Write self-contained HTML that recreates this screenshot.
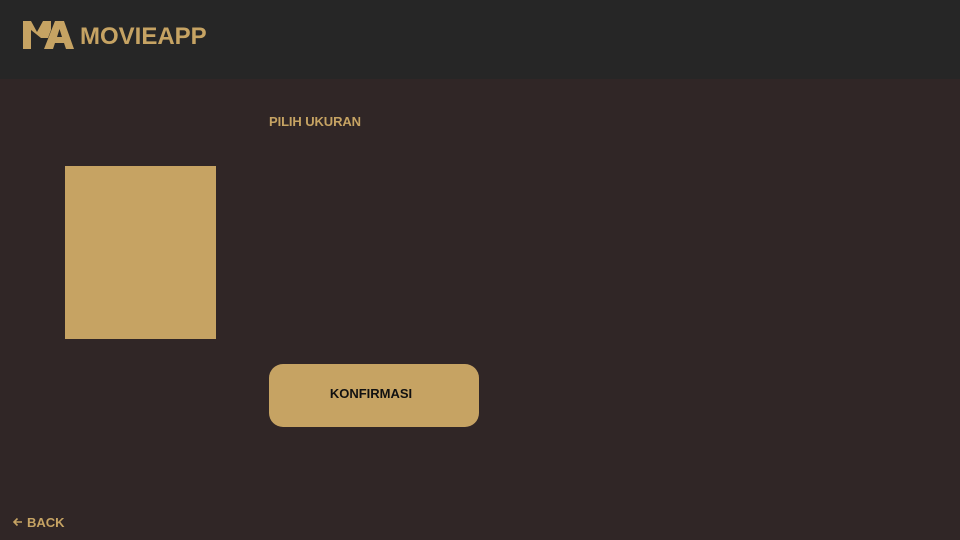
<!DOCTYPE html>
<html><head><style>
body{margin:0;width:960px;height:540px;background:#302626;font-family:"Liberation Sans",sans-serif;position:relative;overflow:hidden}
.hdr{position:absolute;left:0;top:0;width:960px;height:79px;background:#262626}
.t{position:absolute;color:#c6a363;font-weight:bold}
</style></head><body>
<div class="hdr"></div>
<svg style="position:absolute;left:0;top:0" width="80" height="60">
<polygon fill="#c6a363" points="23,49 23,21 31,21 37,32 43,21 51,21 51,30 48,38 41,38 31,30 31,49"/>
<polygon fill="#c6a363" points="44,49 55,21 64,21 74,49 66,49 64,43 55,43 53,49"/>
<polygon fill="#262626" points="57,37 62,37 59.5,29"/>
</svg>
<div class="t" style="left:80px;top:23px;font-size:24px">MOVIEAPP</div>
<div class="t" style="left:269px;top:114px;font-size:13px;letter-spacing:-0.1px">PILIH UKURAN</div>
<div style="position:absolute;left:65px;top:166px;width:151px;height:173px;background:#c6a363"></div>
<div style="position:absolute;left:269px;top:364px;width:210px;height:63px;background:#c6a363;border-radius:14px;display:flex;align-items:center;justify-content:center;font-weight:bold;font-size:13px;color:#111;padding-bottom:4px;box-sizing:border-box;padding-right:6px">KONFIRMASI</div>
<svg style="position:absolute;left:12px;top:517px" width="11" height="10"><path d="M10 5H2M5.5 1.5L2 5l3.5 3.5" stroke="#c6a363" stroke-width="1.6" fill="none"/></svg>
<div class="t" style="left:27px;top:515px;font-size:13px">BACK</div>
</body></html>
